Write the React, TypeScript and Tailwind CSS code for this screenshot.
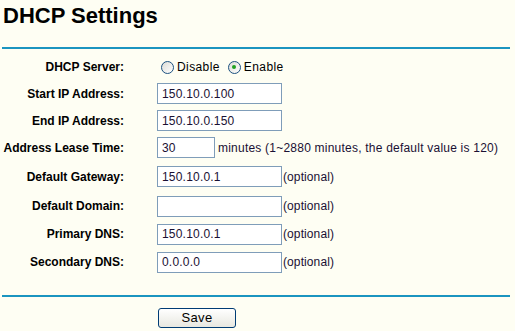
import React from "react";

const Radio = ({ checked }: { checked?: boolean }) => (
  <span className="relative inline-block w-[13px] h-[13px] rounded-full border border-[#1c5180] bg-gradient-to-br from-[#dcdcd6] to-white mr-[3px]">
    {checked && (
      <span className="absolute left-[3.5px] top-[3.5px] w-[4px] h-[4px] rounded-full bg-[#21a121]" />
    )}
  </span>
);

const Input = ({ value, w = "w-[125px]" }: { value: string; w?: string }) => (
  <div className={`${w} h-[21px] border border-[#7f9db9] bg-white flex items-center px-[4px] text-[12px] tracking-[0.2px] text-[#1a1033]`}>
    {value}
  </div>
);

const Row = ({ label, h, children }: { label: string; h: string; children: React.ReactNode }) => (
  <div className={`flex items-center ${h}`}>
    <div className="w-[124px] text-right font-bold text-[12px] text-black">{label}</div>
    <div className="ml-[33px] flex items-center">{children}</div>
  </div>
);

const Opt = () => <span className="text-[12px] text-[#1a1033] ml-[1px] tracking-[0.1px]">(optional)</span>;

export default function App() {
  return (
    <div
      className="w-[515px] h-[331px] bg-[#fefef3] overflow-hidden"
      style={{ fontFamily: '"Liberation Sans", Arial, sans-serif' }}
    >
      <div className="h-[47px] pl-[3px] pt-[1px]">
        <div className="text-[22px] font-bold leading-[30px] text-black">DHCP Settings</div>
      </div>
      <div className="ml-[2px] w-[508px] h-[2px] bg-[#1b95c0]" />
      <div className="h-[5px]" />
      <Row label="DHCP Server:" h="h-[26px]">
        <label className="flex items-center text-[12px] tracking-[0.4px] text-black ml-[4px]">
          <Radio />
          Disable
        </label>
        <label className="flex items-center text-[12px] tracking-[0.4px] text-black ml-[8px]">
          <Radio checked />
          Enable
        </label>
      </Row>
      <Row label="Start IP Address:" h="h-[27px]">
        <Input value="150.10.0.100" />
      </Row>
      <Row label="End IP Address:" h="h-[27px]">
        <Input value="150.10.0.150" />
      </Row>
      <Row label="Address Lease Time:" h="h-[27px]">
        <Input value="30" w="w-[58px]" />
        <span className="ml-[3px] text-[12px] tracking-[0.22px] text-[#1a1033]">
          minutes (1~2880 minutes, the default value is 120)
        </span>
      </Row>
      <Row label="Default Gateway:" h="h-[31px]">
        <Input value="150.10.0.1" />
        <Opt />
      </Row>
      <Row label="Default Domain:" h="h-[28px]">
        <Input value="" />
        <Opt />
      </Row>
      <Row label="Primary DNS:" h="h-[28px]">
        <Input value="150.10.0.1" />
        <Opt />
      </Row>
      <Row label="Secondary DNS:" h="h-[28px]">
        <Input value="0.0.0.0" />
        <Opt />
      </Row>
      <div className="h-[19px]" />
      <div className="ml-[2px] w-[508px] h-[2px] bg-[#1b95c0]" />
      <div className="pl-[158px] pt-[8px]">
        <button className="w-[78px] h-[20px] rounded-[3px] border border-[#003c74] bg-gradient-to-b from-white to-[#e8e8e0] text-[13px] tracking-[0.3px] text-black leading-none">
          Save
        </button>
      </div>
    </div>
  );
}
